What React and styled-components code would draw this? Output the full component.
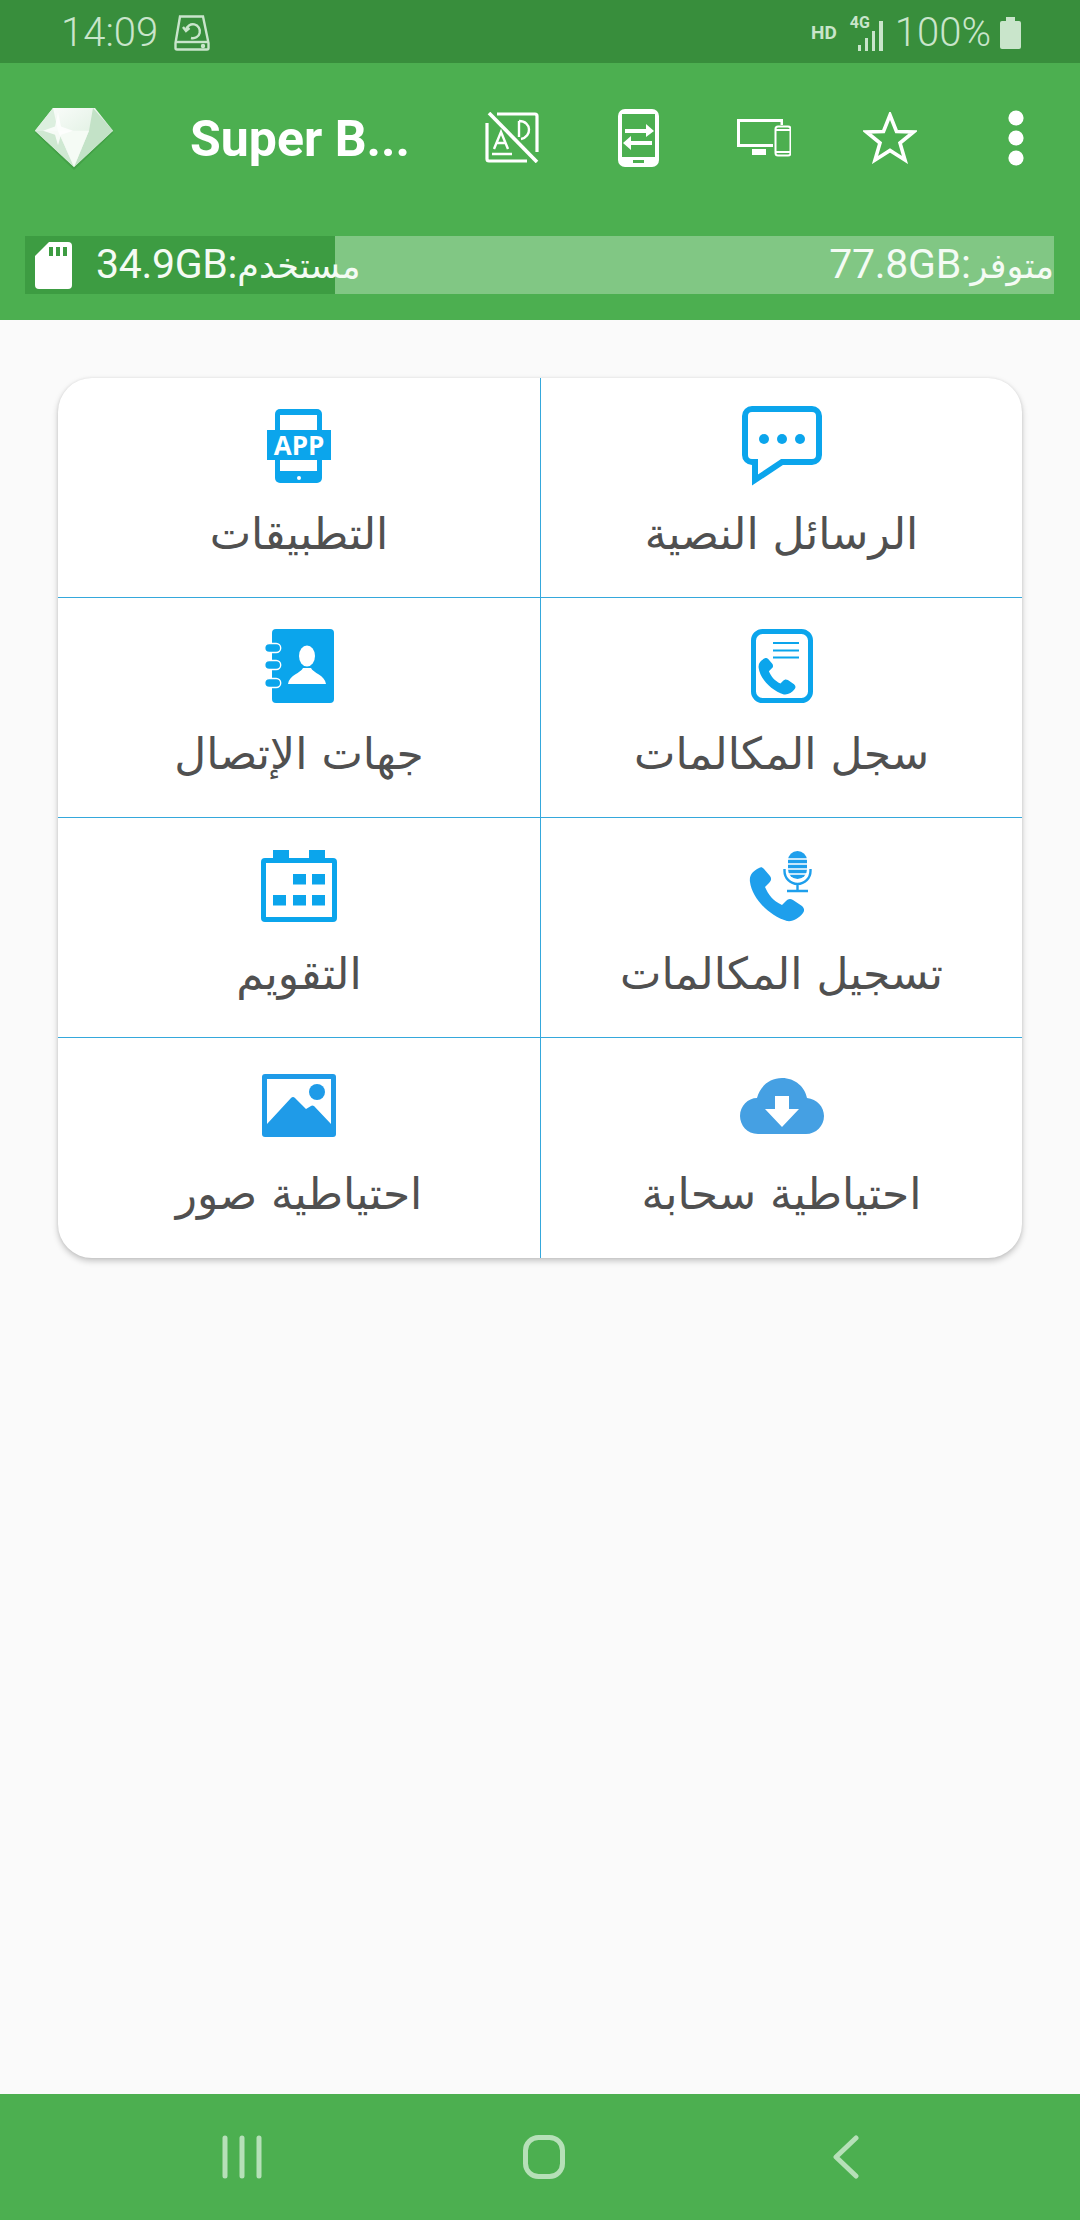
import React from 'react';
import styled, { createGlobalStyle } from 'styled-components';

const Global = createGlobalStyle`
  html, body { margin: 0; padding: 0; background: #fafafa; }
  * { box-sizing: border-box; }
`;

const Page = styled.div`
  width: 1080px; height: 2220px; display: flex; flex-direction: column;
  font-family: Roboto, "DejaVu Sans", sans-serif; background: #fafafa; overflow: hidden;
`;
const StatusBar = styled.div`
  height: 63px; background: #388e3c; color: #c9e5cb; display: flex; align-items: center;
  justify-content: space-between; padding: 2px 59px 0 61px; font-size: 40px; font-weight: 300;
`;
const StatusGroup = styled.div`display: flex; align-items: center; gap: ${p => p.$gap || 0}px;`;
const Header = styled.div`
  height: 257px; background: #4caf50; display: flex; flex-direction: column;
`;
const Toolbar = styled.div`
  height: 173px; display: flex; align-items: center; padding: 0 0 24px 35px;
`;
const Logo = styled.svg`width: 78px; height: 62px; flex: none; margin-right: 77px; margin-top: 2px;`;
const Title = styled.div`
  width: 259px; flex: none; color: #fff; font-size: 50px; font-weight: 700; white-space: nowrap; margin-bottom: -2px;
`;
const Actions = styled.div`
  display: grid; grid-template-columns: repeat(5, 126px); align-items: center; justify-items: center;
  flex: none; svg { display: block; }
`;
const Usage = styled.div`
  height: 58px; margin: 0 26px 26px 25px; display: flex; color: #f4fbf4; font-size: 41px; font-weight: 400;
`;
const Used = styled.div`
  width: 310px; flex: none; background: #3d9c42; display: flex; align-items: center; padding-left: 10px; gap: 24px;
  white-space: nowrap; position: relative; z-index: 1;
`;
const BarText = styled.span`
  letter-spacing: -0.3px; line-height: 58px;
`;
const BarArabic = styled.span`
  font-family: "DejaVu Sans", sans-serif; font-size: 35px; font-weight: 400; letter-spacing: 0;
`;
const Free = styled.div`
  flex: 1; background: #81c784; display: flex; align-items: center; justify-content: flex-end; white-space: nowrap;
`;
const Main = styled.main`flex: 1; padding: 58px 58px 0;`;
const Card = styled.div`
  background: #fff; border-radius: 34px; display: grid; grid-template-columns: 1fr 1fr; overflow: hidden;
  box-shadow: 0 3px 6px rgba(0,0,0,.22), 0 0 3px rgba(0,0,0,.08);
`;
const Cell = styled.div`
  height: 220px; display: flex; flex-direction: column; align-items: center;
  border-bottom: ${p => (p.$last ? 'none' : '1.5px solid #35a8dc')};
  border-left: ${p => (p.$right ? '1.5px solid #35a8dc' : 'none')};
`;
const IconBox = styled.div`
  height: 82px; margin-top: 27px; display: flex; align-items: center; justify-content: center;
`;
const Label = styled.div`
  color: #505050; font-size: 44px; line-height: 60px; margin-top: 17px; white-space: nowrap;
  font-family: "DejaVu Sans", sans-serif;
`;
const NavBar = styled.div`
  height: 126px; background: #4caf50; display: grid; grid-template-columns: repeat(3, 302px); align-items: center;
  justify-items: center; padding-left: 91px;
`;

const Diamond = () => (
  <Logo viewBox="0 0 78 60" preserveAspectRatio="none">
    <defs>
      <linearGradient id="dg" x1="0" y1="0" x2="1" y2="1">
        <stop offset="0" stopColor="#ffffff" />
        <stop offset="1" stopColor="#cfe8d2" />
      </linearGradient>
    </defs>
    <polygon points="39,60 0,24 18,2 60,2 78,24" fill="#2e7d32" opacity=".3" />
    <polygon points="39,57 0,22 18,0 60,0 78,22" fill="url(#dg)" />
    <polygon points="58,0 78,22 39,57 54,22" fill="#c3e2c7" />
    <polygon points="18,0 0,22 23,22" fill="#dcefdf" />
    <polygon points="0,22 23,22 39,57" fill="#cfe8d2" />
    <polygon points="23,22 54,22 39,57" fill="#f5fbf5" />
    <polygon points="23,4 26,18 38,22 26,26 23,36 20,26 8,22 20,18" fill="#fff" opacity=".8" />
  </Logo>
);

const AdOff = () => (
  <svg width="54" height="51" viewBox="0 0 54 51" fill="none" stroke="#fff">
    <path d="M12 2 H50 a2 2 0 0 1 2 2 V40 M42 49 H4 a2 2 0 0 1-2-2 V11" strokeWidth="3.2" />
    <path d="M4 1 L52 50" strokeWidth="3.6" />
    <path d="M9 37 L16 20 L23 37 M12 31 H20 M7 42 H27" strokeWidth="2.4" />
    <path d="M34 9 V25 M34 9 C47 9 47 25 36 27" strokeWidth="2.4" />
  </svg>
);
const PhoneSwap = () => (
  <svg width="41" height="58" viewBox="0 0 41 58">
    <rect width="41" height="58" rx="7" fill="#fff" />
    <rect x="4" y="5" width="33" height="43" fill="#4caf50" />
    <rect x="15" y="51" width="11" height="3" fill="#4caf50" />
    <path d="M7 20 H28 V15 L36 22 L28 28 V24 H7 Z M34 32 H13 V27 L5 34 L13 41 V36 H34 Z" fill="#fff" />
  </svg>
);
const Devices = () => (
  <svg width="54" height="38" viewBox="0 0 54 38">
    <path d="M0 0 H46 V6 H43.5 V3 H3 V25 H36 V28 H0 Z" fill="#fff" />
    <rect x="15" y="30" width="14" height="6" fill="#fff" />
    <rect x="38.5" y="7.5" width="15" height="29" rx="2.5" fill="#4caf50" stroke="#fff" strokeWidth="2" />
    <rect x="38" y="10" width="16" height="2" fill="#fff" />
    <rect x="38" y="32" width="16" height="2" fill="#fff" />
  </svg>
);
const StarIcon = () => (
  <svg width="54" height="52" viewBox="0 0 53 52" fill="none" stroke="#fff" strokeWidth="3.6" strokeLinejoin="miter">
    <polygon points="26.5,3 33,19.5 50,20 36.5,31 41.5,48 26.5,38.5 11.5,48 16.5,31 3,20 20,19.5" />
  </svg>
);
const Dots = () => (
  <svg width="16" height="56" viewBox="0 0 16 56" fill="#fff">
    <circle cx="8" cy="8" r="7.6" /><circle cx="8" cy="28" r="7.6" /><circle cx="8" cy="48" r="7.6" />
  </svg>
);

const DriveIcon = () => (
  <svg width="36" height="36" viewBox="0 0 36 36" fill="none" stroke="#c9e5cb" strokeWidth="2.4">
    <path d="M6 1.5 H29 L34.5 28 V33 a1.5 1.5 0 0 1-1.5 1.5 H3 a1.5 1.5 0 0 1-1.5-1.5 V28 Z" />
    <path d="M2 27 H34" />
    <path d="M12 15 a7 7 0 1 1 5 8" />
    <path d="M9 12 L12 16 L15.5 13" />
    <circle cx="29" cy="31" r="1" fill="#c9e5cb" />
  </svg>
);
const Signal = styled.div`
  position: relative; width: 36px; height: 36px; flex: none;
`;
const FourG = styled.span`
  position: absolute; left: 0; top: 0; font-size: 16px; line-height: 16px; font-weight: 700;
`;
const SignalBars = () => (
  <Signal>
    <FourG>4G</FourG>
    <svg width="36" height="36" viewBox="0 0 36 36" fill="#c9e5cb">
      <rect x="8" y="29" width="3" height="6" /><rect x="15" y="22" width="3" height="13" />
      <rect x="22" y="15" width="3" height="20" /><rect x="29" y="5" width="4" height="30" />
    </svg>
  </Signal>
);
const HD = styled.span`font-size: 19px; font-weight: 700; margin-right: 4px;`;
const BatteryIcon = () => (
  <svg width="21" height="32" viewBox="0 0 21 32" fill="#c9e5cb">
    <rect x="6" y="0" width="9" height="4" /><rect x="0" y="4" width="21" height="28" rx="2" />
  </svg>
);
const SdCard = () => (
  <svg width="37" height="47" viewBox="0 0 37 47" style={{ flex: 'none' }}>
    <path d="M14 0 H33 a4 4 0 0 1 4 4 V43 a4 4 0 0 1-4 4 H4 a4 4 0 0 1-4-4 V14 Z" fill="#fff" />
    <rect x="14" y="5" width="4" height="9" fill="#3d9c42" /><rect x="21" y="5" width="4" height="9" fill="#3d9c42" /><rect x="28" y="5" width="4" height="9" fill="#3d9c42" />
  </svg>
);

const BLUE = '#0ba5ec';
const handset = 'M10 2 C4 5 0 9 1 16 C3 32 20 50 38 55 C44 56 50 52 54 47 C56 44 55 42 53 40 L44 34 C41 32 39 33 37 35 L33 39 C24 35 19 28 16 21 L20 17 C22 15 23 13 21 10 L15 3 C13 1 12 1 10 2Z';

const ChatIcon = () => (
  <svg width="80" height="81" viewBox="0 0 80 81">
    <path d="M10 3 H70 a7 7 0 0 1 7 7 V49 a7 7 0 0 1-7 7 H40 L13 74 V56 H10 a7 7 0 0 1-7-7 V10 a7 7 0 0 1 7-7 Z" fill="none" stroke={BLUE} strokeWidth="6" />
    <circle cx="22" cy="33" r="5" fill={BLUE} /><circle cx="40" cy="33" r="5" fill={BLUE} /><circle cx="58" cy="33" r="5" fill={BLUE} />
  </svg>
);
const AppIcon = () => (
  <svg width="64" height="74" viewBox="0 0 64 74">
    <rect x="8" y="0" width="47" height="74" rx="5" fill={BLUE} />
    <rect x="13" y="6" width="37" height="60" fill="#fff" />
    <rect x="0" y="21" width="64" height="30" fill={BLUE} />
    <rect x="13" y="62" width="37" height="5" fill={BLUE} />
    <circle cx="32" cy="69" r="2" fill="#fff" />
    <text x="32" y="46" textAnchor="middle" fontFamily="Open Sans" fontWeight="700" fontSize="26" fill="#fff">APP</text>
  </svg>
);
const ContactsIcon = () => (
  <svg width="70" height="74" viewBox="0 0 70 74">
    <rect x="8" y="0" width="62" height="74" rx="4" fill={BLUE} />
    {[19, 36, 54].map(y => <rect key={y} x="0.7" y={y - 4.5} width="16" height="9" rx="4.5" fill={BLUE} stroke="#fff" strokeWidth="1.4" />)}
    <ellipse cx="43" cy="27" rx="8" ry="10.5" fill="#fff" />
    <path d="M24 55 C25 46 37 44 39 39 H47 C49 44 61 46 62 55 Z" fill="#fff" />
  </svg>
);
const CallLogIcon = () => (
  <svg width="62" height="74" viewBox="0 0 62 74">
    <rect x="2.5" y="2.5" width="57" height="69" rx="9" fill="none" stroke={BLUE} strokeWidth="5" />
    <path d="M22 14 H48 M22 21.5 H48 M22 28.5 H48" stroke={BLUE} strokeWidth="2" />
    <path d={handset} fill={BLUE} transform="translate(7 28) scale(.68)" />
  </svg>
);
const CalendarIcon = () => (
  <svg width="76" height="72" viewBox="0 0 76 72">
    <rect x="2.5" y="10.5" width="71" height="59" rx="1.5" fill="none" stroke={BLUE} strokeWidth="5" />
    <rect x="12" y="0" width="16" height="10" fill={BLUE} /><rect x="48" y="0" width="16" height="10" fill={BLUE} />
    {[[32, 24], [51, 24], [12, 45], [32, 45], [51, 45]].map(([x, y]) => <rect key={x + '-' + y} x={x} y={y} width="13" height="10.5" fill={BLUE} />)}
  </svg>
);
const RecordIcon = () => (
  <svg width="65" height="71" viewBox="0 0 65 71">
    <path d={handset} fill="#1e9fec" transform="translate(0 15)" />
    <rect x="39" y="0" width="19" height="28" rx="9.5" fill="#1e9fec" />
    <path d="M39 8 H58 M39 13 H58 M39 18 H58 M39 23 H58" stroke="#fff" strokeWidth="1.5" />
    <path d="M35.5 18 V20 a13 13 0 0 0 26 0 V18 M48.5 33 V39 M38 40 H59" fill="none" stroke="#1e9fec" strokeWidth="2.4" />
  </svg>
);
const PhotoIcon = () => (
  <svg width="74" height="64" viewBox="0 0 74 64">
    <rect x="0" y="0" width="74" height="63" rx="3" fill="#1f9be8" />
    <rect x="5" y="5" width="64" height="48" fill="#fff" />
    <path d="M5 50 L29 24 Q31 22 33 24 L44 35 L49 32 Q50 31 52 32 L69 50 V58 H5 Z" fill="#1f9be8" />
    <circle cx="55" cy="18" r="8" fill="#1f9be8" />
  </svg>
);
const CloudIcon = () => (
  <svg width="84" height="56" viewBox="0 0 84 56">
    <path d="M18 56 C7 56 0 47 0 38 C0 28 8 20 17 20 C20 8 30 0 42 0 C55 0 65 9 67 20 C77 21 84 29 84 38 C84 48 76 56 66 56 Z" fill="#45a0e3" />
    <path d="M35 18 H49 V31 H59 L42 49 L25 31 H35 Z" fill="#fff" />
  </svg>
);

const NavRecents = () => (
  <svg width="44" height="44" viewBox="0 0 44 44" stroke="#b6e0b8" strokeWidth="5" strokeLinecap="round">
    <path d="M5 3 V41 M22 3 V41 M39 3 V41" />
  </svg>
);
const NavHome = () => (
  <svg width="42" height="44" viewBox="0 0 42 44" fill="none" stroke="#b6e0b8" strokeWidth="5">
    <rect x="2.5" y="2.5" width="37" height="39" rx="13" />
  </svg>
);
const NavBack = () => (
  <svg width="26" height="44" viewBox="0 0 26 44" fill="none" stroke="#b6e0b8" strokeWidth="5" strokeLinecap="round" strokeLinejoin="round">
    <path d="M23 3 L3 22 L23 41" />
  </svg>
);

const items = [
  ['الرسائل النصية', ChatIcon, true],
  ['التطبيقات', AppIcon, false],
  ['سجل المكالمات', CallLogIcon, true],
  ['جهات الإتصال', ContactsIcon, false],
  ['تسجيل المكالمات', RecordIcon, true],
  ['التقويم', CalendarIcon, false],
  ['احتياطية سحابة', CloudIcon, true],
  ['احتياطية صور', PhotoIcon, false],
];

export default function App() {
  return (
    <Page>
      <Global />
      <StatusBar>
        <StatusGroup $gap={16}>14:09<DriveIcon /></StatusGroup>
        <StatusGroup $gap={9}>
          <HD>HD</HD><SignalBars /><span>100%</span><BatteryIcon />
        </StatusGroup>
      </StatusBar>
      <Header>
        <Toolbar>
          <Diamond />
          <Title>Super B...</Title>
          <Actions>
            <AdOff /><PhoneSwap /><Devices /><StarIcon /><Dots />
          </Actions>
        </Toolbar>
        <Usage>
          <Used><SdCard /><BarText>34.9GB:<BarArabic>مستخدم</BarArabic></BarText></Used>
          <Free><BarText>77.8GB:<BarArabic>متوفر</BarArabic></BarText></Free>
        </Usage>
      </Header>
      <Main>
        <Card dir="rtl">
          {items.map(([label, Icon, right], i) => (
            <Cell key={label} $right={right} $last={i >= 6}>
              <IconBox><Icon /></IconBox>
              <Label>{label}</Label>
            </Cell>
          ))}
        </Card>
      </Main>
      <NavBar>
        <NavRecents /><NavHome /><NavBack />
      </NavBar>
    </Page>
  );
}
